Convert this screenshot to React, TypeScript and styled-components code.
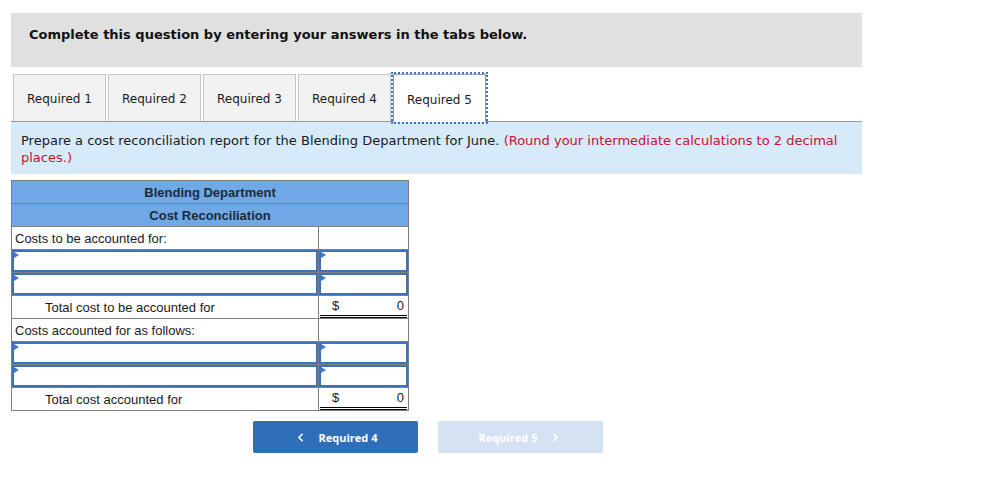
import React from "react";
import styled, { createGlobalStyle } from "styled-components";
import { ChevronLeft, ChevronRight } from "lucide-react";

const Global = createGlobalStyle`
  html, body { margin: 0; padding: 0; background: #fff; }
  body { font-family: "DejaVu Sans", Verdana, sans-serif; color: #111; }
`;

const Page = styled.div`
  padding: 13px 0 0 11px;
  width: 851px;
`;

const Banner = styled.div`
  height: 54px;
  box-sizing: border-box;
  background: #e0e0e0;
  padding: 14px 0 0 18px;
  line-height: 16px;
  font-size: 13px;
  font-weight: bold;
  color: #111;
`;

const TabBar = styled.div`
  margin-top: 7px;
  display: flex;
  gap: 2px;
  padding-left: 2px;
  height: 47px;
  border-bottom: 1px solid #999;
`;

const Tab = styled.div<{ $active?: boolean }>`
  width: 93px;
  box-sizing: border-box;
  height: 47px;
  border: 1px solid #c6c6c6;
  border-bottom: none;
  background: ${(p) => (p.$active ? "#fff" : "#f2f2f2")};
  display: flex;
  align-items: center;
  justify-content: center;
  padding-top: 2px;
  font-size: 12px;
  color: #1a1a1a;
  ${(p) =>
    p.$active &&
    `
    border-color: #9a9a9a;
    height: 48px;
    outline: 2px dotted #3a74c4;
    outline-offset: 0px;
  `}
`;

const Instruction = styled.div`
  background: #d7eaf9;
  padding: 10px 10px 0 10px;
  height: 52px;
  box-sizing: border-box;
  font-size: 13px;
  line-height: 17px;
  color: #1a1a1a;
`;

const Red = styled.span`
  color: #c8102e;
`;

const Sheet = styled.div`
  margin-top: 6px;
  width: 397px;
  border-top: 1px solid #7f7f7f;
  border-left: 1px solid #7f7f7f;
  font-family: "Liberation Sans", Arial, sans-serif;
  font-size: 13px;
  color: #1a1a1a;
`;

const HeadRow = styled.div`
  height: 23px;
  box-sizing: border-box;
  background: #6fa8e4;
  border-right: 1px solid #7f7f7f;
  border-bottom: 1px solid #7f7f7f;
  display: flex;
  align-items: center;
  justify-content: center;
  font-weight: bold;
  color: #1e2a3a;
`;

const Row = styled.div`
  display: flex;
  height: 23px;
`;

const Cell = styled.div<{ $w: number; $indent?: boolean }>`
  width: ${(p) => p.$w}px;
  box-sizing: border-box;
  border-right: 1px solid #7f7f7f;
  border-bottom: 1px solid #7f7f7f;
  display: flex;
  align-items: center;
  padding-left: ${(p) => (p.$indent ? 33 : 3)}px;
  background: #fff;
  position: relative;
`;

const InputCell = styled(Cell)`
  box-shadow: inset 0 0 0 2px #3b72bd;
  &::before {
    content: "";
    position: absolute;
    left: 2px;
    top: 2px;
    border-top: 3px solid transparent;
    border-bottom: 3px solid transparent;
    border-left: 5px solid #3a7ad0;
  }
`;

const AmountCell = styled.div`
  width: 90px;
  box-sizing: border-box;
  border-right: 1px solid #7f7f7f;
  border-bottom: 1px solid #7f7f7f;
  padding: 0 1px;
  display: flex;
`;

const Amount = styled.div`
  flex: 1;
  display: flex;
  justify-content: space-between;
  align-items: center;
  padding: 0 3px 0 12px;
  border-bottom: 3px double #000;
`;

const Nav = styled.div`
  display: flex;
  gap: 20px;
  padding-left: 242px;
  margin-top: 10px;
`;

const NavButton = styled.div<{ $disabled?: boolean }>`
  width: 165px;
  height: 32px;
  border-radius: 2px;
  background: ${(p) => (p.$disabled ? "#d5e2f3" : "#2f6fba")};
  color: #fff;
  display: flex;
  align-items: center;
  justify-content: center;
  gap: 12px;
  font-family: "Open Sans", Roboto, sans-serif;
  font-weight: 700;
  font-size: 11px;
`;

export default function App() {
  return (
    <>
      <Global />
      <Page>
        <Banner>Complete this question by entering your answers in the tabs below.</Banner>
        <TabBar>
          <Tab>Required 1</Tab>
          <Tab>Required 2</Tab>
          <Tab>Required 3</Tab>
          <Tab>Required 4</Tab>
          <Tab $active>Required 5</Tab>
        </TabBar>
        <Instruction>
          Prepare a cost reconciliation report for the Blending Department for June.{" "}
          <Red>(Round your intermediate calculations to 2 decimal places.)</Red>
        </Instruction>
        <Sheet>
          <HeadRow>Blending Department</HeadRow>
          <HeadRow>Cost Reconciliation</HeadRow>
          <Row>
            <Cell $w={307}>Costs to be accounted for:</Cell>
            <Cell $w={90} />
          </Row>
          <Row>
            <InputCell $w={307} />
            <InputCell $w={90} />
          </Row>
          <Row>
            <InputCell $w={307} />
            <InputCell $w={90} />
          </Row>
          <Row>
            <Cell $w={307} $indent>Total cost to be accounted for</Cell>
            <AmountCell>
              <Amount>
                <span>$</span>
                <span>0</span>
              </Amount>
            </AmountCell>
          </Row>
          <Row>
            <Cell $w={307}>Costs accounted for as follows:</Cell>
            <Cell $w={90} />
          </Row>
          <Row>
            <InputCell $w={307} />
            <InputCell $w={90} />
          </Row>
          <Row>
            <InputCell $w={307} />
            <InputCell $w={90} />
          </Row>
          <Row>
            <Cell $w={307} $indent>Total cost accounted for</Cell>
            <AmountCell>
              <Amount>
                <span>$</span>
                <span>0</span>
              </Amount>
            </AmountCell>
          </Row>
        </Sheet>
        <Nav>
          <NavButton>
            <ChevronLeft size={13} strokeWidth={3} />
            <span>Required 4</span>
          </NavButton>
          <NavButton $disabled>
            <span>Required 5</span>
            <ChevronRight size={13} strokeWidth={3} />
          </NavButton>
        </Nav>
      </Page>
    </>
  );
}
